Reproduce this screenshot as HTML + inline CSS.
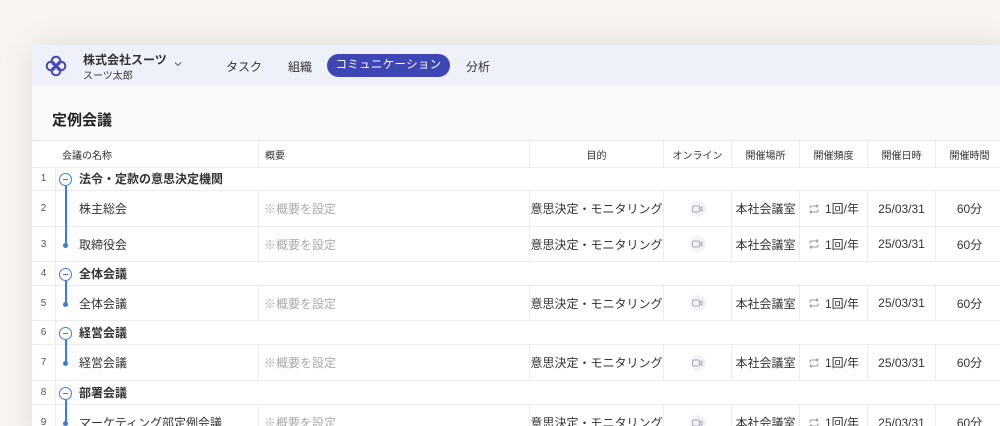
<!DOCTYPE html>
<html><head><meta charset="utf-8"><style>
*{margin:0;padding:0;box-sizing:border-box}
html,body{width:1000px;height:426px;overflow:hidden}
body{background:#f8f5f1;font-family:"Liberation Sans","Noto Sans CJK JP",sans-serif;color:#333;position:relative}
.win{position:absolute;left:32px;top:45px;width:980px;height:400px;background:#fafafa;box-shadow:0 0 30px rgba(0,0,0,0.10);}
.hdr{position:absolute;left:0;top:0;right:0;height:41px;background:#eef0fa}
.a{position:absolute;white-space:nowrap}
.nav{font-size:12px;color:#333;top:13px}
.pill{position:absolute;left:295px;top:9px;width:123px;height:23px;border-radius:12px;background:#3e45b5;color:#fff;font-size:11.5px;text-align:center;line-height:23px;letter-spacing:0.3px;white-space:nowrap}
.tbl{position:absolute;left:0;top:95px;right:0;bottom:0;background:#fff;border-top:1px solid #e6e6e6}
.row{position:absolute;left:0;right:0;border-bottom:1px solid #ececec}
.c{position:absolute;top:0;bottom:0;border-left:1px solid #ececec;display:flex;align-items:center;justify-content:center;font-size:12px;color:#333;white-space:nowrap;overflow:hidden}
.th .c{font-size:10px;color:#333}
.num{position:absolute;left:0;width:23px;top:0;bottom:0;display:flex;align-items:center;justify-content:center;font-size:10px;color:#555}
.nm{position:absolute;left:47px;top:0;bottom:0;display:flex;align-items:center;font-size:12px;white-space:nowrap}
.g .nm{font-weight:bold;font-size:12px}
.ph{color:#aaa;justify-content:flex-start;padding-left:5px;font-size:12px}
.circ{position:absolute;left:27px;width:13px;height:13px;border:1.3px solid #3b7be0;border-radius:50%;background:#fff}
.circ:after{content:"";position:absolute;left:3px;top:5px;width:5px;height:1.3px;background:#3b7be0}
.ln{position:absolute;left:33px;width:1.5px;background:#3b7be0}
.dot{position:absolute;left:31px;width:5px;height:5px;border-radius:50%;background:#3b7be0}
</style></head><body>
<div class="win">
 <div class="hdr">
  <svg class="a" style="left:12px;top:9px" width="24" height="24" viewBox="0 0 24 24" fill="none" stroke="#4347b8" stroke-width="2"><circle cx="12" cy="7" r="4.3"/><circle cx="17" cy="12" r="4.3"/><circle cx="12" cy="17" r="4.3"/><circle cx="7" cy="12" r="4.3"/></svg>
  <div class="a" style="left:51px;top:6px;font-size:12px;font-weight:bold;color:#333">株式会社スーツ</div>
  <div class="a" style="left:51px;top:22px;font-size:10px;color:#333">スーツ太郎</div>
  <svg class="a" style="left:142px;top:16px" width="8" height="6" viewBox="0 0 8 6"><path d="M1 1.5 4 4.5 7 1.5" fill="none" stroke="#666" stroke-width="1.1"/></svg>
  <div class="a nav" style="left:194px">タスク</div>
  <div class="a nav" style="left:256px">組織</div>
  <div class="pill">コミュニケーション</div>
  <div class="a nav" style="left:434px">分析</div>
 </div>
 <div class="a" style="left:20px;top:64px;font-size:15px;font-weight:bold;color:#222">定例会議</div>
 <div class="tbl">
  <div class="row th" style="top:0;height:27px">
   <div class="nm" style="left:30px;font-size:10px">会議の名称</div>
   <div class="c" style="left:226px;width:271px;justify-content:flex-start;padding-left:6px">概要</div>
   <div class="c" style="left:497px;width:134px">目的</div>
   <div class="c" style="left:631px;width:68px">オンライン</div>
   <div class="c" style="left:699px;width:68px">開催場所</div>
   <div class="c" style="left:767px;width:68px">開催頻度</div>
   <div class="c" style="left:835px;width:68px">開催日時</div>
   <div class="c" style="left:903px;width:68px">開催時間</div>
  </div>
  <div style="position:absolute;left:23px;top:27px;bottom:0;border-left:1px solid #ececec"></div>
  <div id="rows"></div>
 </div>
</div>
<script>
var R=[[1,'g','法令・定款の意思決定機関',26,24],[2,'r','株主総会',50,36],[3,'r','取締役会',86,35],[4,'g','全体会議',121,24],[5,'r','全体会議',145,35],[6,'g','経営会議',180,24],[7,'r','経営会議',204,36],[8,'g','部署会議',240,24],[9,'r','マーケティング部定例会議',264,36]];
var h='';
R.forEach(function(r){
 var t=r[3],ht=r[4];
 h+='<div class="row '+r[1]+'" style="top:'+t+'px;height:'+ht+'px"><div class="num">'+r[0]+'</div><div class="nm">'+r[2]+'</div>';
 if(r[1]=='r'){
  h+='<div class="c ph" style="left:226px;width:271px">※概要を設定</div><div class="c" style="left:497px;width:134px">意思決定・モニタリング</div>'+
  '<div class="c" style="left:631px;width:68px"><span style="display:inline-flex;width:16px;height:16px;border-radius:50%;background:#f2f3f6;align-items:center;justify-content:center"><svg width="11" height="8" viewBox="0 0 11 8" fill="none" stroke="#aab" stroke-width="1"><rect x="0.5" y="1" width="7" height="6" rx="1.5"/><path d="M7.5 3.5 10 2v4L7.5 4.5"/></svg></span></div>'+
  '<div class="c" style="left:699px;width:68px">本社会議室</div>'+
  '<div class="c" style="left:767px;width:68px"><svg width="12" height="12" viewBox="0 0 12 12" fill="none" stroke="#999" stroke-width="1.1" style="margin-right:5px"><path d="M2 5.5V4.5a1.5 1.5 0 0 1 1.5-1.5H10M8.5 1.5 10 3 8.5 4.5M10 6.5v1a1.5 1.5 0 0 1-1.5 1.5H2M3.5 10.5 2 9 3.5 7.5"/></svg>1回/年</div>'+
  '<div class="c" style="left:835px;width:68px">25/03/31</div><div class="c" style="left:903px;width:68px">60分</div>';
 }
 h+='</div>';
});
[[1,3],[4,5],[6,7],[8,9]].forEach(function(p){var a=R[p[0]-1],b=R[p[1]-1];var y1=a[3]+19,y2=b[3]+b[4]/2;h+='<div class="ln" style="top:'+y1+'px;height:'+(y2-y1)+'px"></div><div class="dot" style="top:'+(y2-2)+'px"></div><div class="circ" style="top:'+(a[3]+6)+'px"></div>';});
document.getElementById('rows').innerHTML=h;
</script>
</body></html>
